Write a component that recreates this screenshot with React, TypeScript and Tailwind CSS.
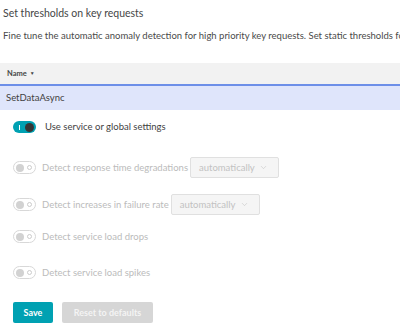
import { ChevronDown } from 'lucide-react'

const font = { fontFamily: 'Lato, "Open Sans", "Liberation Sans", sans-serif' }

function OnToggle() {
  return (
    <div className="flex h-[12px] w-[23px] shrink-0 items-center justify-between rounded-full bg-[#00a1b2] pl-[6px] pr-[2px]">
      <span className="h-[5px] w-px bg-white" />
      <span className="h-[9px] w-[9px] rounded-full bg-[#363636]" />
    </div>
  )
}

function OffToggle() {
  return (
    <div className="flex h-[13px] w-[23px] shrink-0 items-center justify-between rounded-full border border-[#d8d8d8] bg-white pl-[2px] pr-[3px]">
      <span className="h-[8px] w-[8px] rounded-full bg-[#d2d2d2]" />
      <span className="h-[5px] w-[5px] rounded-full border border-[#cccccc]" />
    </div>
  )
}

function Dropdown() {
  return (
    <div className="ml-[2px] flex h-[21px] w-[89px] items-center justify-between rounded-[2px] border border-[#e0e0e0] bg-[#f5f5f5] pl-[8px] pr-[10px] text-[9.5px] leading-[12px] text-[#c2c2c2]">
      <span>automatically</span>
      <ChevronDown size={9} strokeWidth={1.5} />
    </div>
  )
}

function Setting({ label, select }: { label: string; select?: boolean }) {
  return (
    <div className="flex h-[21px] items-center pl-[13px]">
      <OffToggle />
      <span className="ml-[6px] text-[9.5px] leading-[12px] text-[#bbbbbb]">{label}</span>
      {select && <Dropdown />}
    </div>
  )
}

export default function App() {
  return (
    <div className="h-[330px] w-[400px] overflow-hidden bg-white text-[#454646]" style={font}>
      <h1 className="whitespace-nowrap pl-[3px] pt-[4px] text-[10.5px] leading-[18px] text-[#454646]">
        Set thresholds on key requests
      </h1>
      <p className="mt-[8px] whitespace-nowrap pl-[3px] text-[9.5px] leading-[12px] text-[#4a4a4a]">
        Fine tune the automatic anomaly detection for high priority key requests. Set static thresholds for the key requests below.
      </p>

      <div className="mt-[21px]">
        <div className="flex h-[21px] items-center bg-[#f2f2f2] pl-[7px] text-[7.5px] font-bold text-[#454646]">
          Name <span className="ml-[3px] text-[5px]">▼</span>
        </div>
        <div className="h-[2px] bg-[#6d8fe8]" />
        <div className="flex h-[24px] items-center bg-[#dfe5fb] pl-[6px] text-[9.5px] text-[#3f3f3f]">
          SetDataAsync
        </div>
      </div>

      <div className="mt-[11px] flex h-[12px] items-center gap-[9px] pl-[13px]">
        <OnToggle />
        <span className="text-[9.5px] leading-[12px] text-[#3f3f3f]">Use service or global settings</span>
      </div>

      <div className="mt-[24px] flex flex-col gap-[16px]">
        <Setting label="Detect response time degradations" select />
        <Setting label="Detect increases in failure rate" select />
      </div>
      <div className="mt-[11px] flex flex-col gap-[15px]">
        <Setting label="Detect service load drops" />
        <Setting label="Detect service load spikes" />
      </div>

      <div className="mt-[19px] flex gap-[9px] pl-[13px]">
        <button className="h-[21px] w-[40px] rounded-[2px] bg-[#00a1b2] text-[9px] font-bold text-white">
          Save
        </button>
        <button className="h-[21px] w-[91px] rounded-[2px] bg-[#d6d6d6] text-[9px] font-bold text-[#f4f4f4]">
          Reset to defaults
        </button>
      </div>
    </div>
  )
}
